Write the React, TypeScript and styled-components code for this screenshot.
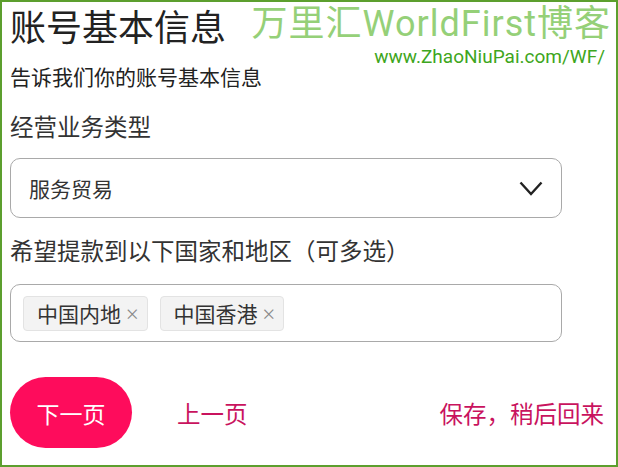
import styled, { createGlobalStyle } from "styled-components";

const GlobalStyle = createGlobalStyle`
  html, body {
    margin: 0;
    padding: 0;
    background: #ffffff;
  }
  body {
    font-family: "Noto Sans CJK SC", "Noto Sans", sans-serif;
  }
`;

// 전체 프레임 (초록 테두리)
const Frame = styled.div`
  width: 618px;
  height: 467px;
  box-sizing: border-box;
  border: 2px solid #5c9f2e;
  padding: 0 5px 0 8px;
  overflow: hidden;
  display: flex;
  flex-direction: column;
  align-items: flex-start;
`;

const Header = styled.div`
  align-self: stretch;
  display: flex;
  justify-content: space-between;
  align-items: flex-start;
  height: 61px;
`;

const Title = styled.h1`
  margin: 0;
  font-size: 36px;
  font-weight: 400;
  line-height: 46px;
  color: #222;
`;

// 워터마크 (오른쪽 위)
const Watermark = styled.div`
  display: flex;
  flex-direction: column;
  align-items: flex-end;
`;

const WatermarkName = styled.div`
  font-family: Roboto, "Noto Sans CJK SC", sans-serif;
  font-size: 36px;
  line-height: 40px;
  color: #95d078;
  letter-spacing: 1px;
  margin-top: 2px;
`;

const WatermarkUrl = styled.div`
  font-family: Roboto, "Noto Sans", sans-serif;
  font-size: 19px;
  line-height: 22px;
  color: #3ea620;
  margin-top: 2px;
  margin-right: 6px;
`;

const Subtitle = styled.p`
  margin: 0;
  font-size: 21px;
  line-height: 26px;
  color: #222;
`;

const Label = styled.div<{ $top: number }>`
  margin-top: ${(p) => p.$top}px;
  font-size: 23.5px;
  line-height: 32px;
  color: #333;
`;

const Field = styled.div<{ $top: number; $height: number }>`
  margin-top: ${(p) => p.$top}px;
  width: 552px;
  height: ${(p) => p.$height}px;
  box-sizing: border-box;
  border: 1px solid #a9a9a9;
  border-radius: 10px;
  display: flex;
  align-items: center;
`;

const SelectField = styled(Field)`
  justify-content: space-between;
  padding: 0 18px 0 18px;
`;

const SelectValue = styled.span`
  font-size: 21px;
  color: #333;
`;

const TagField = styled(Field)`
  padding: 0 12px;
  gap: 12px;
`;

const Tag = styled.span`
  display: inline-flex;
  align-items: center;
  height: 35px;
  box-sizing: border-box;
  padding: 0 8px 0 13px;
  background: #f3f3f3;
  border: 1px solid #e3e3e3;
  border-radius: 4px;
  font-size: 21px;
  color: #333;
`;

const TagClose = styled.span`
  margin-left: 5px;
  font-family: "Noto Sans", sans-serif;
  font-size: 22px;
  font-weight: 300;
  color: #888;
`;

const Footer = styled.div`
  align-self: stretch;
  margin-top: 35px;
  display: flex;
  align-items: center;
  padding-right: 7px;
`;

const NextButton = styled.button`
  width: 122px;
  height: 71px;
  border: 0;
  border-radius: 36px;
  background: #fe0c5c;
  color: #fff;
  font-family: "Noto Sans CJK SC", sans-serif;
  font-size: 23px;
  padding: 0;
`;

const TextLink = styled.span<{ $push?: boolean }>`
  font-size: 23.5px;
  color: #c9135e;
  margin-left: ${(p) => (p.$push ? "auto" : "45px")};
`;

const Chevron = () => (
  <svg width="24" height="15" viewBox="0 0 24 15" fill="none">
    <path d="M1.5 1.5 L12 13 L22.5 1.5" stroke="#222" strokeWidth="2.4" />
  </svg>
);

export default function App() {
  return (
    <>
      <GlobalStyle />
      <Frame>
        <Header>
          <Title>账号基本信息</Title>
          <Watermark>
            <WatermarkName>万里汇WorldFirst博客</WatermarkName>
            <WatermarkUrl>www.ZhaoNiuPai.com/WF/</WatermarkUrl>
          </Watermark>
        </Header>
        <Subtitle>告诉我们你的账号基本信息</Subtitle>
        <Label $top={21}>经营业务类型</Label>
        <SelectField $top={16} $height={60}>
          <SelectValue>服务贸易</SelectValue>
          <Chevron />
        </SelectField>
        <Label $top={16}>希望提款到以下国家和地区（可多选）</Label>
        <TagField $top={18} $height={58}>
          <Tag>
            中国内地<TagClose>×</TagClose>
          </Tag>
          <Tag>
            中国香港<TagClose>×</TagClose>
          </Tag>
        </TagField>
        <Footer>
          <NextButton>下一页</NextButton>
          <TextLink>上一页</TextLink>
          <TextLink $push>保存，稍后回来</TextLink>
        </Footer>
      </Frame>
    </>
  );
}
